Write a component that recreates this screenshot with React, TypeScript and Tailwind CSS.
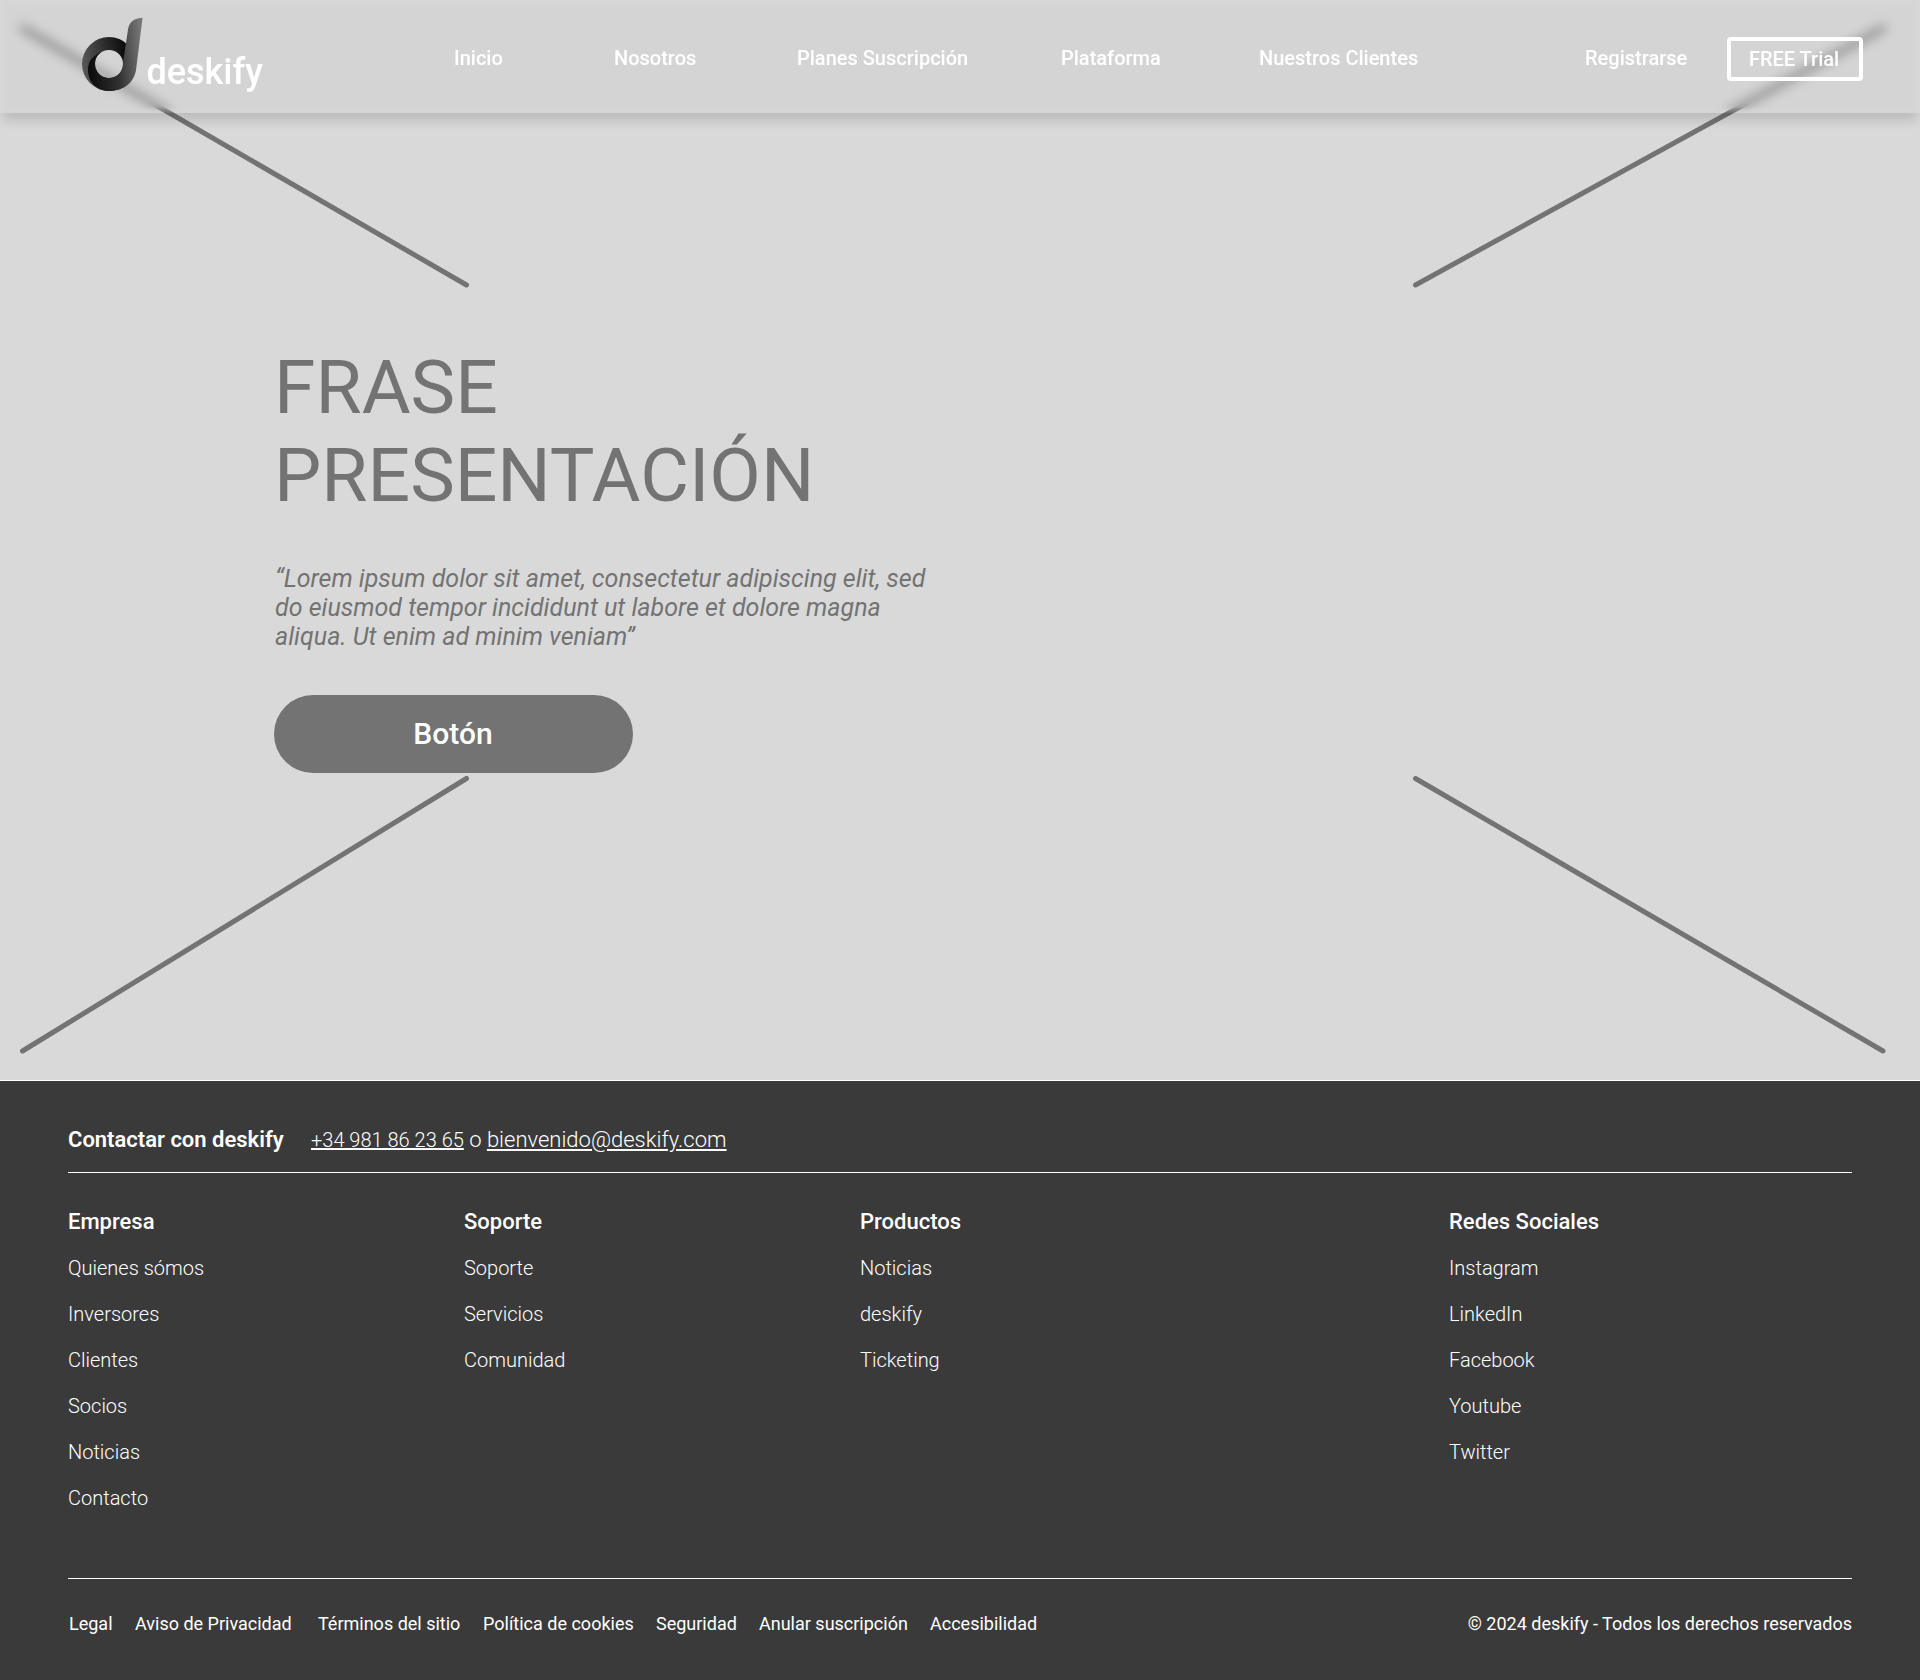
const footerColumns = [
  { title: "Empresa", links: ["Quienes sómos", "Inversores", "Clientes", "Socios", "Noticias", "Contacto"] },
  { title: "Soporte", links: ["Soporte", "Servicios", "Comunidad"] },
  { title: "Productos", links: ["Noticias", "deskify", "Ticketing"] },
  { title: "Redes Sociales", links: ["Instagram", "LinkedIn", "Facebook", "Youtube", "Twitter"] },
];

function LogoMark() {
  return (
    <svg className="h-[75px] w-[64px] shrink-0" viewBox="80 17 64 75" fill="none">
      <defs>
        <linearGradient id="ring" gradientUnits="userSpaceOnUse" x1="82" y1="64" x2="126" y2="58">
          <stop offset="0" stopColor="#585858" />
          <stop offset="0.45" stopColor="#363636" />
          <stop offset="1" stopColor="#0c0c0c" />
        </linearGradient>
        <linearGradient id="stem" gradientUnits="userSpaceOnUse" x1="89" y1="64" x2="143" y2="58">
          <stop offset="0" stopColor="#0c0c0c" />
          <stop offset="0.5" stopColor="#2f2f2f" />
          <stop offset="1" stopColor="#757575" />
        </linearGradient>
      </defs>
      <path
        fill="url(#ring)"
        fillRule="evenodd"
        d="M109 37a27 27 0 1 0 0 54a27 27 0 1 0 0-54ZM109 50a14 14 0 1 1 0 28a14 14 0 1 1 0-28Z"
      />
      <path
        fill="url(#stem)"
        d="M142.5 18C134 17.5 128.6 22.5 127.8 31L123.4 60L123 64A14 14 0 0 1 95 64C95 58 98 54 102 52C92 55 88 62 88 70C88 82 97 91 109 91C124 91 135 82 136.3 68Z"
      />
    </svg>
  );
}

function Header() {
  return (
    <header className="relative flex h-[113px] text-[20px] leading-[24px] font-medium text-white shadow-[0_11px_10px_-3px_rgba(0,0,0,0.13)]">
      <div className="absolute inset-0 [mask-image:linear-gradient(to_bottom,black_calc(100%-6px),transparent)] backdrop-blur-[6px]" />
      <div className="absolute inset-0 bg-black/[0.02] shadow-[inset_0_0_8px_rgba(255,255,255,0.07)]" />
      <div className="relative flex w-[454px] pt-[17px] pl-[80px]">
        <LogoMark />
        <span className="mt-[34px] ml-[2.5px] text-[36px] leading-[42px]">deskify</span>
      </div>
      <nav className="relative grid grid-cols-[160px_183px_264px_198px_326px] pt-[46px]">
        <a>Inicio</a>
        <a>Nosotros</a>
        <a>Planes Suscripción</a>
        <a>Plataforma</a>
        <a>Nuestros Clientes</a>
      </nav>
      <a className="relative w-[142px] pt-[46px]">Registrarse</a>
      <a className="relative mt-[37px] flex h-[44px] w-[136px] items-center justify-center rounded-[4px] border-4 border-white pr-[2px]">
        FREE Trial
      </a>
    </header>
  );
}

function HeroLines() {
  return (
    <svg className="absolute inset-0 h-[1080px] w-[1920px]" viewBox="0 0 1920 1080">
      <g stroke="#737373" strokeWidth="5" strokeLinecap="round">
        <path d="M22.5 28L466.5 285" />
        <path d="M1883.5 28L1415.5 285" />
        <path d="M22.5 1051L466.5 778.5" />
        <path d="M1883 1051L1415.5 778.5" />
      </g>
    </svg>
  );
}

function Footer() {
  return (
    <footer className="h-[599px] bg-[#3a3a3a] px-[68px] text-white">
      <div className="flex h-[92px] items-baseline border-b border-white pt-[46px] text-[22px] leading-[26px]">
        <span className="w-[243px] font-semibold">Contactar con deskify</span>
        <span className="font-light">
          <a className="text-[20px] underline">+34 981 86 23 65</a> o <a className="underline">bienvenido@deskify.com</a>
        </span>
      </div>
      <div className="grid h-[405px] grid-cols-[396px_396px_589px_auto] pt-[35px]">
        {footerColumns.map((column) => (
          <div key={column.title}>
            <h2 className="text-[22px] leading-[27px] font-medium">{column.title}</h2>
            <ul className="mt-[10px] text-[20px] leading-[46px] font-light">
              {column.links.map((link) => (
                <li key={link}>{link}</li>
              ))}
            </ul>
          </div>
        ))}
      </div>
      <div className="flex border-t border-white pt-[34px] text-[18px] leading-[21px]">
        <div className="grid grid-cols-[66px_183px_165px_173px_103px_171px_140px] pl-px whitespace-nowrap">
          <a>Legal</a>
          <a>Aviso de Privacidad</a>
          <a>Términos del sitio</a>
          <a>Política de cookies</a>
          <a>Seguridad</a>
          <a>Anular suscripción</a>
          <a>Accesibilidad</a>
        </div>
        <span className="ml-auto">© 2024 deskify - Todos los derechos reservados</span>
      </div>
    </footer>
  );
}

export default function App() {
  return (
    <div className="w-[1920px] font-['Roboto',sans-serif]">
      <section className="relative h-[1081px] border-b border-white bg-[#d9d9d9]">
        <HeroLines />
        <Header />
        <div className="relative ml-[274px] w-[670px] pt-[230px] text-[#737373]">
          <h1 className="text-[75px] leading-[88px]">
            FRASE
            <br />
            PRESENTACIÓN
          </h1>
          <p className="mt-[45px] ml-px h-[88px] text-[25px] leading-[29px] italic">
            “Lorem ipsum dolor sit amet, consectetur adipiscing elit, sed
            <br />
            do eiusmod tempor incididunt ut labore et dolore magna
            <br />
            aliqua. Ut enim ad minim veniam”
          </p>
          <button className="mt-[43px] flex h-[78px] w-[359px] items-center justify-center rounded-[39px] bg-[#737373] pr-px pb-[2px] text-[30px] font-medium text-white">
            Botón
          </button>
        </div>
      </section>
      <Footer />
    </div>
  );
}
